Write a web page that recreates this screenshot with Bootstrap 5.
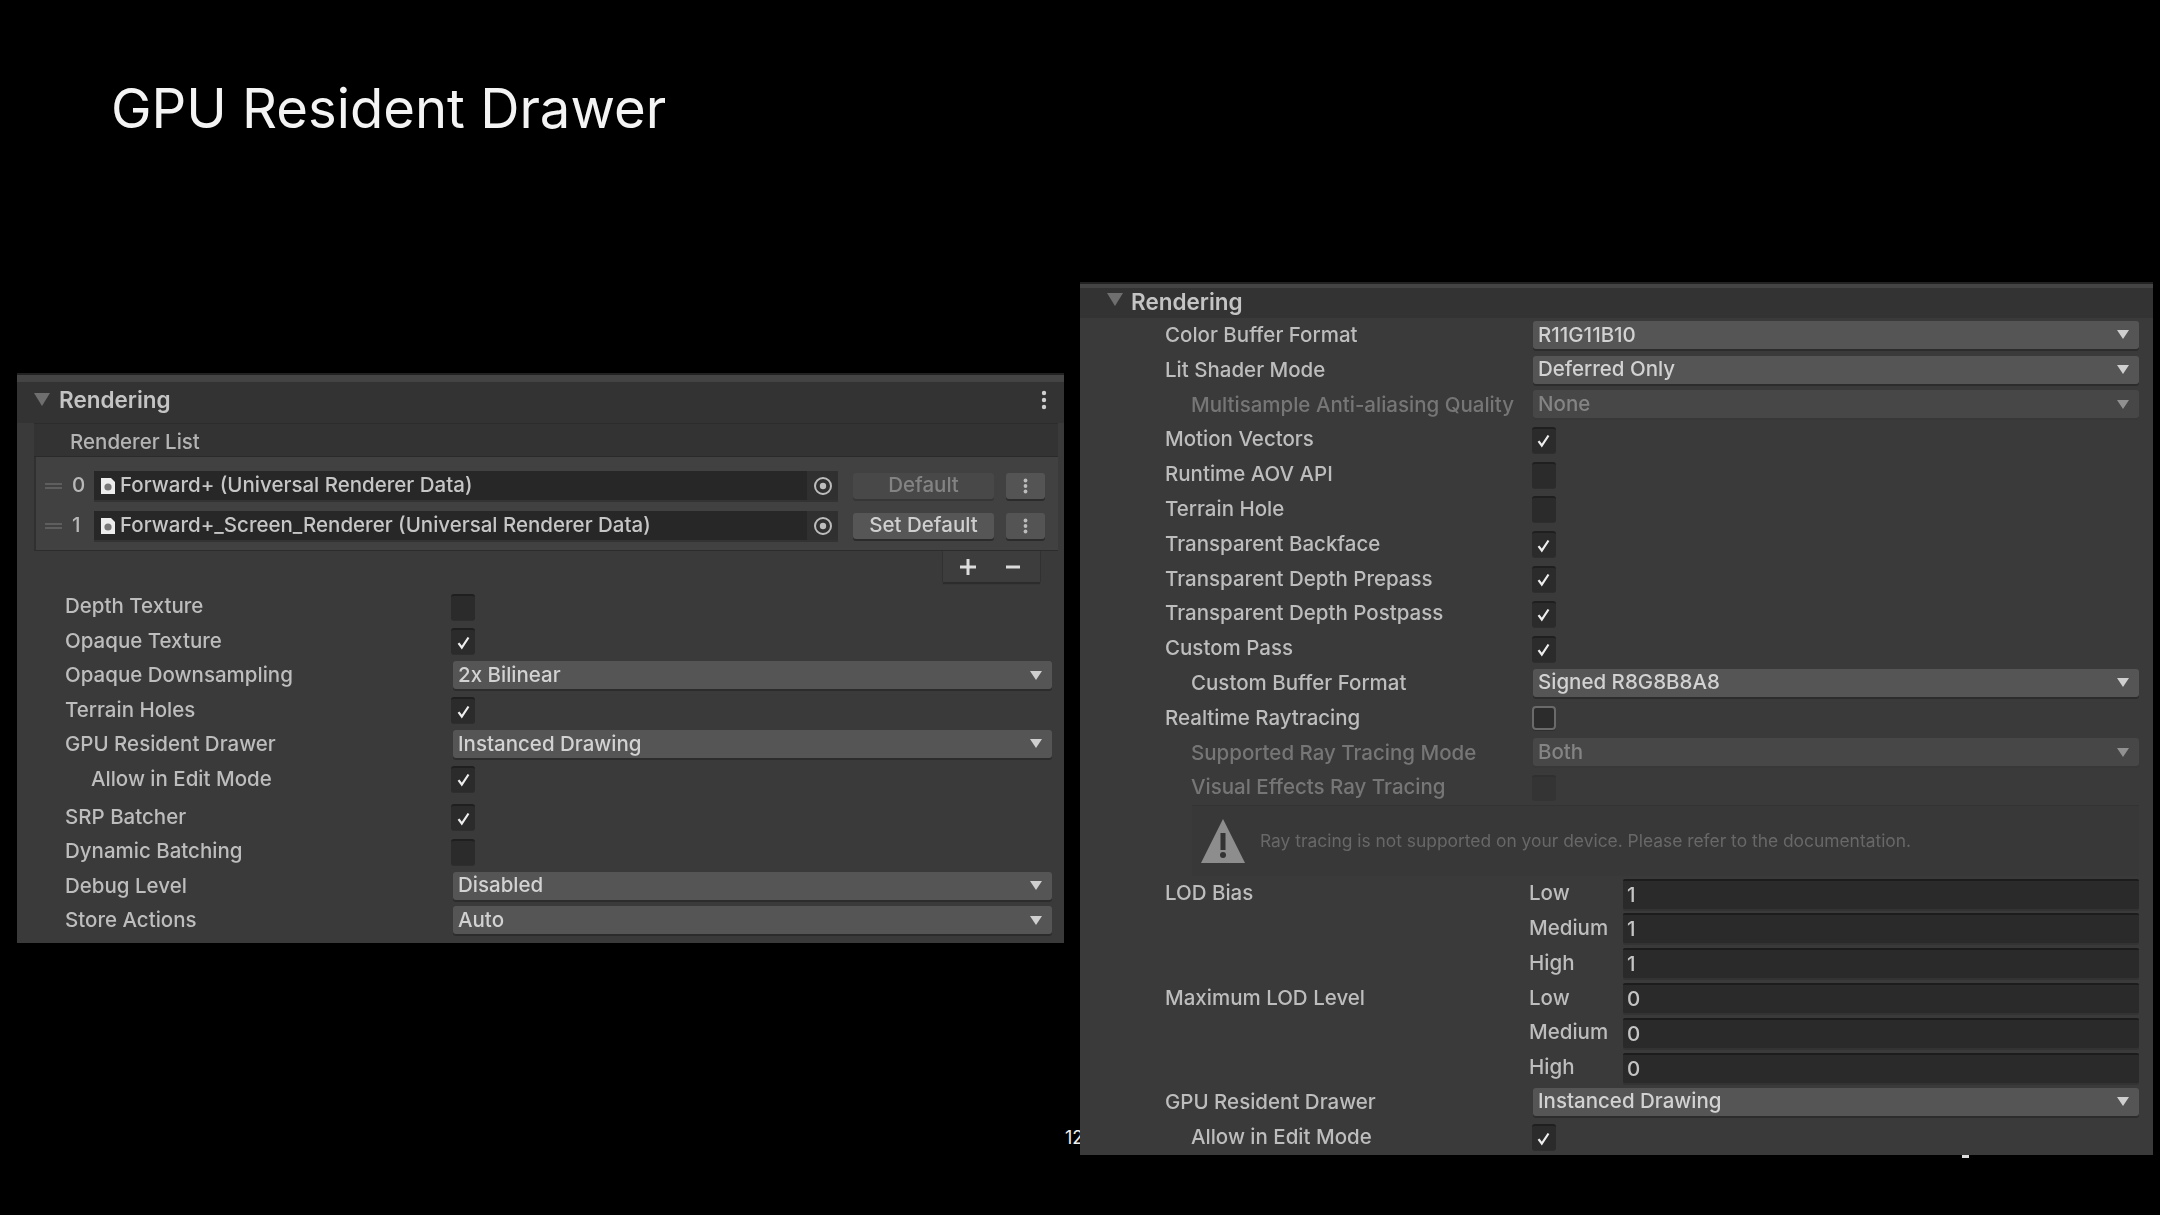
<!DOCTYPE html>
<html lang="en">
<head>
  <meta charset="UTF-8" />
  <title>GPU Resident Drawer</title>
  <link href="https://cdn.jsdelivr.net/npm/bootstrap@5.3.0/dist/css/bootstrap.min.css" rel="stylesheet" />
  <style>
    body {
      background: #000;
      width: 2160px;
      height: 1215px;
      overflow: hidden;
      font-family: Inter, "Liberation Sans", sans-serif;
      position: relative;
    }
    .slide-title {
      font-size: 54.4px;
      font-weight: 400;
      line-height: 64px;
      color: #f4f4f4;
      padding: 76px 0 0 111px;
      margin: 0;
      height: 140px;
    }
    .panels {
      margin-top: 142px;
      padding-left: 17px;
      gap: 16px;
      filter: blur(0.7px);
      position: relative;
      z-index: 1;
    }
    .insp {
      background: #3a3a3a;
      color: #bdbdbd;
      font-size: 20.5px;
      font-weight: 500;
      border-top: 2px solid #222;
    }
    .insp-left { width: 1047px; height: 570px; margin-top: 91px; }
    .insp-right { width: 1073px; height: 873px; }
    .insp-head {
      background: #333;
      border-top: 7px solid #444;
      font-weight: 600;
      font-size: 22.5px;
      color: #c4c4c4;
    }
    .insp-left .insp-head { height: 48px; padding: 0 17px 6px 17px; }
    .insp-right .insp-head { height: 34px; padding: 0 0 0 27px; align-items: flex-start !important; border-top-width: 4px; line-height: 27px; }
    .fold { width: 16px; height: 13px; margin-right: 9px; flex: none; }
    .insp-right .fold { margin-top: 5px; margin-right: 8px; }
    .kebab { width: 6px; height: 20px; }

    /* renderer list */
    .rlist { margin: 0 6px 0 17px; }
    .rlist-head { height: 34px; background: #333; border-top: 1px solid #2c2c2c; border-bottom: 1px solid #2a2a2a; padding: 5px 0 0 36px; color: #b4b4b4; }
    .rlist-body { background: #414141; height: 94px; padding: 14px 10px 0 8px; gap: 11px; border-left: 2px solid #303030; border-bottom: 1px solid #2c2c2c; }
    .rlist-row { height: 29px; }
    .grip { width: 17px; height: 6px; margin-left: 1px; border-top: 2px solid #5e5e5e; border-bottom: 2px solid #5e5e5e; flex: none; }
    .idx { width: 32px; padding-left: 10px; color: #b8b8b8; flex: none; }
    .objfield { width: 744px; height: 29px; background: #272727; box-shadow: 0 2px 0 #333; padding-left: 6px; color: #c6c6c6; white-space: nowrap; }
    .docicon { width: 16px; height: 20px; margin-right: 4px; flex: none; }
    .picker { width: 31px; height: 29px; background: #303030; flex: none; }
    .picker svg { width: 20px; height: 20px; }
    .setbtn { width: 141px; height: 26px; margin-left: 15px; background: #565656; color: #cfcfcf; border-radius: 3px; box-shadow: 0 2px 0 #2b2b2b; flex: none; }
    .setbtn.off { background: #484848; color: #838383; box-shadow: 0 2px 0 #363636; }
    .morebtn { width: 39px; height: 26px; margin-left: 12px; background: #545454; border-radius: 3px; box-shadow: 0 2px 0 #2b2b2b; flex: none; }
    .morebtn svg { width: 5px; height: 16px; }
    .addrow { width: 97px; height: 31px; margin: 0 0 0 909px; background: #3d3d3d; box-shadow: 0 2px 1px #2c2c2c, -1px 0 0 #333, 1px 0 0 #333; padding: 0 18px 0 16px; color: #d8d8d8; }
    .addrow svg { width: 18px; height: 18px; }

    /* property rows */
    .props-left { padding-top: 7.5px; }
    .prop-left { height: 34.45px; padding: 0 12px 0 48px; }
    .prop-right { height: 34.8px; padding: 0 14px 0 85px; }
    .prop-left .lbl { width: 388px; }
    .prop-right .lbl { width: 368px; }
    .prop-left .tick { margin-left: -2px; }
    .prop-right .tick { margin-left: -1.5px; }
    .lbl { flex: none; white-space: nowrap; }
    .lbl.sub { padding-left: 26px; }
    .off-text { color: #767676; }
    .gap-srp { margin-top: 4px; }
    .ddl {
      flex: 1 1 0;
      height: 28px;
      margin-top: -1px;
      background: #555;
      color: #d2d2d2;
      border-radius: 3px;
      padding: 0 10px 0 5px;
      box-shadow: 0 2px 0 #2c2c2c;
    }
    .ddl.off { background: #474747; color: #848484; box-shadow: 0 2px 0 #383838; }
    .ddl svg { width: 12px; height: 9px; }
    .ddl.off svg { opacity: .55; }
    .tick {
      width: 24px;
      height: 26px;
      background: #2b2b2b;
      border-radius: 3px;
      border-top: 2px solid #1f1f1f;
      box-shadow: 0 1px 0 #2e2e2e;
    }
    .tick svg { width: 15px; height: 15px; }
    .tick.outlined { height: 24px; background: #2c2c2c; border: 2px solid #6a6a6a; border-radius: 4px; }
    .tick.off { background: #343434; border-top-color: #303030; box-shadow: none; }
    .warnbox { height: 71px; margin: 0 14px 0 112px; background: #383838; border-top: 1px solid #333; padding-left: 7px; color: #686868; font-size: 17.4px; font-weight: 400; white-space: nowrap; }
    .warnbox svg { width: 48px; height: 48px; margin-right: 13px; }
    .sublbl { width: 94px; margin-left: -4px; flex: none; }
    .numfield { flex: 1 1 0; height: 30px; background: #2a2a2a; border-top: 2px solid #1c1c1c; border-radius: 2px; color: #c4c4c4; padding-left: 4px; line-height: 28px; box-shadow: 0 2px 0 #333; }

    .pagenum { position: absolute; left: 1065px; top: 1127px; color: #eee; font-size: 18px; line-height: 22px; }
    .tinymark { position: absolute; left: 1962px; top: 1155px; width: 7px; height: 3px; background: #ddd; z-index: 2; }
  </style>
</head>
<body>
  <svg width="0" height="0" class="position-absolute">
    <symbol id="s-fold" viewBox="0 0 16 13"><path d="M0 0h16L8 13z" fill="#6f6f6f"/></symbol>
    <symbol id="s-kebab" viewBox="0 0 6 20"><circle cx="3" cy="3" r="2.2" fill="#cfcfcf"/><circle cx="3" cy="10" r="2.2" fill="#cfcfcf"/><circle cx="3" cy="17" r="2.2" fill="#cfcfcf"/></symbol>
    <symbol id="s-more" viewBox="0 0 5 16"><circle cx="2.5" cy="2.5" r="1.9" fill="#bcbcbc"/><circle cx="2.5" cy="8" r="1.9" fill="#bcbcbc"/><circle cx="2.5" cy="13.5" r="1.9" fill="#bcbcbc"/></symbol>
    <symbol id="s-doc" viewBox="0 0 16 18"><path d="M1 1h10l4 4v12H1z" fill="#ececec"/><circle cx="8" cy="10" r="3.6" fill="#777"/></symbol>
    <symbol id="s-pick" viewBox="0 0 20 20"><circle cx="10" cy="10" r="8" fill="none" stroke="#bdbdbd" stroke-width="2"/><circle cx="10" cy="10" r="3.2" fill="#bdbdbd"/></symbol>
    <symbol id="s-arrow" viewBox="0 0 12 9"><path d="M0 0h12L6 9z" fill="#cfcfcf"/></symbol>
    <symbol id="s-check" viewBox="0 0 15 15"><path d="M2.5 8.2l3.3 4.3L12.5 2.5" fill="none" stroke="#eee" stroke-width="2.2"/></symbol>
    <symbol id="s-plus" viewBox="0 0 18 18"><path d="M9 1v16M1 9h16" stroke="#dcdcdc" stroke-width="3" fill="none"/></symbol>
    <symbol id="s-minus" viewBox="0 0 18 18"><path d="M2 9h14" stroke="#dcdcdc" stroke-width="3" fill="none"/></symbol>
  </svg>

  <h1 class="slide-title">GPU Resident Drawer</h1>
  <div class="pagenum">12</div>
  <div class="tinymark"></div>

  <div class="panels d-flex align-items-start">
    <!-- URP asset -->
    <section class="insp insp-left">
      <div class="insp-head d-flex align-items-center">
        <svg class="fold"><use href="#s-fold"/></svg>
        <span class="flex-grow-1">Rendering</span>
        <svg class="kebab"><use href="#s-kebab"/></svg>
      </div>
      <div class="rlist">
        <div class="rlist-head d-flex align-items-center">Renderer List</div>
        <div class="rlist-body d-flex flex-column">
          <div class="rlist-row d-flex align-items-center">
            <span class="grip"></span><span class="idx">0</span>
            <div class="objfield d-flex align-items-center">
              <svg class="docicon"><use href="#s-doc"/></svg>
              <span class="flex-grow-1">Forward+ (Universal Renderer Data)</span>
              <span class="picker d-flex align-items-center justify-content-center"><svg><use href="#s-pick"/></svg></span>
            </div>
            <div class="setbtn off d-flex align-items-center justify-content-center">Default</div>
            <div class="morebtn d-flex align-items-center justify-content-center"><svg><use href="#s-more"/></svg></div>
          </div>
          <div class="rlist-row d-flex align-items-center">
            <span class="grip"></span><span class="idx">1</span>
            <div class="objfield d-flex align-items-center">
              <svg class="docicon"><use href="#s-doc"/></svg>
              <span class="flex-grow-1">Forward+_Screen_Renderer (Universal Renderer Data)</span>
              <span class="picker d-flex align-items-center justify-content-center"><svg><use href="#s-pick"/></svg></span>
            </div>
            <div class="setbtn d-flex align-items-center justify-content-center">Set Default</div>
            <div class="morebtn d-flex align-items-center justify-content-center"><svg><use href="#s-more"/></svg></div>
          </div>
        </div>
        <div class="addrow d-flex align-items-center justify-content-between">
          <svg><use href="#s-plus"/></svg><svg><use href="#s-minus"/></svg>
        </div>
      </div>
      <div class="props-left">
        <div class="prop-left d-flex align-items-center"><span class="lbl">Depth Texture</span><span class="tick d-flex align-items-center justify-content-center"></span></div>
        <div class="prop-left d-flex align-items-center"><span class="lbl">Opaque Texture</span><span class="tick d-flex align-items-center justify-content-center"><svg><use href="#s-check"/></svg></span></div>
        <div class="prop-left d-flex align-items-center"><span class="lbl">Opaque Downsampling</span><div class="ddl d-flex align-items-center justify-content-between">2x Bilinear<svg><use href="#s-arrow"/></svg></div></div>
        <div class="prop-left d-flex align-items-center"><span class="lbl">Terrain Holes</span><span class="tick d-flex align-items-center justify-content-center"><svg><use href="#s-check"/></svg></span></div>
        <div class="prop-left d-flex align-items-center"><span class="lbl">GPU Resident Drawer</span><div class="ddl d-flex align-items-center justify-content-between">Instanced Drawing<svg><use href="#s-arrow"/></svg></div></div>
        <div class="prop-left d-flex align-items-center"><span class="lbl sub">Allow in Edit Mode</span><span class="tick d-flex align-items-center justify-content-center"><svg><use href="#s-check"/></svg></span></div>
        <div class="prop-left gap-srp d-flex align-items-center"><span class="lbl">SRP Batcher</span><span class="tick d-flex align-items-center justify-content-center"><svg><use href="#s-check"/></svg></span></div>
        <div class="prop-left d-flex align-items-center"><span class="lbl">Dynamic Batching</span><span class="tick d-flex align-items-center justify-content-center"></span></div>
        <div class="prop-left d-flex align-items-center"><span class="lbl">Debug Level</span><div class="ddl d-flex align-items-center justify-content-between">Disabled<svg><use href="#s-arrow"/></svg></div></div>
        <div class="prop-left d-flex align-items-center"><span class="lbl">Store Actions</span><div class="ddl d-flex align-items-center justify-content-between">Auto<svg><use href="#s-arrow"/></svg></div></div>
      </div>
    </section>

    <!-- HDRP asset -->
    <section class="insp insp-right">
      <div class="insp-head d-flex">
        <svg class="fold"><use href="#s-fold"/></svg>
        <span>Rendering</span>
      </div>
      <div class="prop-right d-flex align-items-center"><span class="lbl">Color Buffer Format</span><div class="ddl d-flex align-items-center justify-content-between">R11G11B10<svg><use href="#s-arrow"/></svg></div></div>
      <div class="prop-right d-flex align-items-center"><span class="lbl">Lit Shader Mode</span><div class="ddl d-flex align-items-center justify-content-between">Deferred Only<svg><use href="#s-arrow"/></svg></div></div>
      <div class="prop-right d-flex align-items-center"><span class="lbl sub off-text">Multisample Anti-aliasing Quality</span><div class="ddl off d-flex align-items-center justify-content-between">None<svg><use href="#s-arrow"/></svg></div></div>
      <div class="prop-right d-flex align-items-center"><span class="lbl">Motion Vectors</span><span class="tick d-flex align-items-center justify-content-center"><svg><use href="#s-check"/></svg></span></div>
      <div class="prop-right d-flex align-items-center"><span class="lbl">Runtime AOV API</span><span class="tick d-flex align-items-center justify-content-center"></span></div>
      <div class="prop-right d-flex align-items-center"><span class="lbl">Terrain Hole</span><span class="tick d-flex align-items-center justify-content-center"></span></div>
      <div class="prop-right d-flex align-items-center"><span class="lbl">Transparent Backface</span><span class="tick d-flex align-items-center justify-content-center"><svg><use href="#s-check"/></svg></span></div>
      <div class="prop-right d-flex align-items-center"><span class="lbl">Transparent Depth Prepass</span><span class="tick d-flex align-items-center justify-content-center"><svg><use href="#s-check"/></svg></span></div>
      <div class="prop-right d-flex align-items-center"><span class="lbl">Transparent Depth Postpass</span><span class="tick d-flex align-items-center justify-content-center"><svg><use href="#s-check"/></svg></span></div>
      <div class="prop-right d-flex align-items-center"><span class="lbl">Custom Pass</span><span class="tick d-flex align-items-center justify-content-center"><svg><use href="#s-check"/></svg></span></div>
      <div class="prop-right d-flex align-items-center"><span class="lbl sub">Custom Buffer Format</span><div class="ddl d-flex align-items-center justify-content-between">Signed R8G8B8A8<svg><use href="#s-arrow"/></svg></div></div>
      <div class="prop-right d-flex align-items-center"><span class="lbl">Realtime Raytracing</span><span class="tick outlined d-flex align-items-center justify-content-center"></span></div>
      <div class="prop-right d-flex align-items-center"><span class="lbl sub off-text">Supported Ray Tracing Mode</span><div class="ddl off d-flex align-items-center justify-content-between">Both<svg><use href="#s-arrow"/></svg></div></div>
      <div class="prop-right d-flex align-items-center"><span class="lbl sub off-text">Visual Effects Ray Tracing</span><span class="tick off d-flex align-items-center justify-content-center"></span></div>
      <div class="warnbox d-flex align-items-center">
        <svg viewBox="0 0 48 48"><path d="M24 2L46 46H2z" fill="#8d8d8d"/><rect x="21.5" y="16" width="5" height="17" fill="#333"/><circle cx="24" cy="38" r="3" fill="#333"/></svg>
        <span>Ray tracing is not supported on your device. Please refer to the documentation.</span>
      </div>
      <div class="prop-right d-flex align-items-center"><span class="lbl">LOD Bias</span><span class="sublbl">Low</span><div class="numfield">1</div></div>
      <div class="prop-right d-flex align-items-center"><span class="lbl"></span><span class="sublbl">Medium</span><div class="numfield">1</div></div>
      <div class="prop-right d-flex align-items-center"><span class="lbl"></span><span class="sublbl">High</span><div class="numfield">1</div></div>
      <div class="prop-right d-flex align-items-center"><span class="lbl">Maximum LOD Level</span><span class="sublbl">Low</span><div class="numfield">0</div></div>
      <div class="prop-right d-flex align-items-center"><span class="lbl"></span><span class="sublbl">Medium</span><div class="numfield">0</div></div>
      <div class="prop-right d-flex align-items-center"><span class="lbl"></span><span class="sublbl">High</span><div class="numfield">0</div></div>
      <div class="prop-right d-flex align-items-center"><span class="lbl">GPU Resident Drawer</span><div class="ddl d-flex align-items-center justify-content-between">Instanced Drawing<svg><use href="#s-arrow"/></svg></div></div>
      <div class="prop-right d-flex align-items-center"><span class="lbl sub">Allow in Edit Mode</span><span class="tick d-flex align-items-center justify-content-center"><svg><use href="#s-check"/></svg></span></div>
    </section>
  </div>
</body>
</html>
